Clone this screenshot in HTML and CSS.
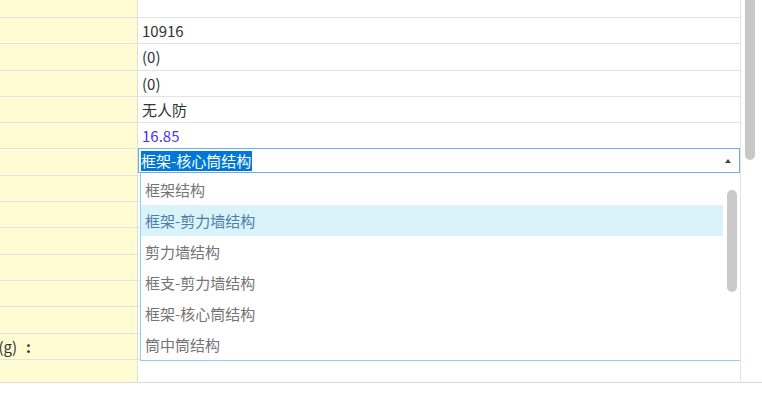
FILE: index.html
```html
<!DOCTYPE html>
<html lang="zh-CN">
<head>
    <meta charset="UTF-8">
    <meta name="viewport" content="width=device-width, initial-scale=1.0">
    <title>结构参数</title>
    <link rel="stylesheet" href="styles.css">
</head>
<body>
    <!-- property grid, scrolled a little -->
    <div class="grid-wrap">
        <div class="grid">
            <div class="rows">
                <div class="row"><div class="key"></div><div class="val"></div></div>
                <div class="row"><div class="key"></div><div class="val">10916</div></div>
                <div class="row"><div class="key"></div><div class="val">(0)</div></div>
                <div class="row"><div class="key"></div><div class="val">(0)</div></div>
                <div class="row"><div class="key"></div><div class="val">无人防</div></div>
                <div class="row"><div class="key"></div><div class="val calc">16.85</div></div>
                <div class="row">
                    <div class="key"></div>
                    <div class="val combo-cell">
                        <div class="combo">
                            <span class="combo-text">框架-核心筒结构</span>
                            <span class="combo-arrow"></span>
                        </div>
                        <!-- open dropdown list -->
                        <div class="combo-list">
                            <div class="combo-item">框架结构</div>
                            <div class="combo-item hover">框架-剪力墙结构</div>
                            <div class="combo-item">剪力墙结构</div>
                            <div class="combo-item">框支-剪力墙结构</div>
                            <div class="combo-item">框架-核心筒结构</div>
                            <div class="combo-item">筒中筒结构</div>
                            <div class="list-thumb"></div>
                        </div>
                    </div>
                </div>
                <div class="row"><div class="key"></div><div class="val"></div></div>
                <div class="row"><div class="key"></div><div class="val"></div></div>
                <div class="row"><div class="key"></div><div class="val"></div></div>
                <div class="row"><div class="key"></div><div class="val"></div></div>
                <div class="row"><div class="key"></div><div class="val"></div></div>
                <div class="row"><div class="key"></div><div class="val"></div></div>
                <div class="row">
                    <div class="key">
                        <div class="label-end"><span>设计基本地震加速度(g)</span><span class="colon">:</span></div>
                    </div>
                    <div class="val"></div>
                </div>
                <div class="row"><div class="key"></div><div class="val"></div></div>
            </div>
        </div>
        <div class="vscroll">
            <div class="vthumb"></div>
        </div>
    </div>
</body>
</html>
```

FILE: styles.css
```css
body {
    margin: 0;
    padding: 0;
    background: #ffffff;
    font-family: "Noto Sans CJK SC", "Noto Sans", sans-serif;
    font-size: 15px;
    color: #333333;
}

.grid-wrap {
    display: flex;
    height: 383px;
    border-bottom: 1px solid #dadada;
    box-sizing: border-box;
    overflow: hidden;
}

.grid {
    width: 741px;
    border-right: 1px solid #e2e2e2;
    box-sizing: border-box;
    overflow: hidden;
}

.rows {
    margin-top: -8.3px; /* list is scrolled a bit */
}

.row {
    display: flex;
    height: 26.3px;
    box-sizing: border-box;
    border-bottom: 1px solid #e3e3e3;
}

.key {
    width: 138px;
    flex-shrink: 0;
    background: #fffbd2;
    border-right: 1px solid #dedede;
    box-sizing: border-box;
    overflow: hidden;
    display: flex;
    align-items: center;
    white-space: nowrap;
}

/* label is longer than the column, only its end shows */
.label-end {
    width: 34px;
    flex-shrink: 0;
    display: flex;
    justify-content: flex-end;
    font-size: 15px;
    color: #333333;
}

.label-end span {
    flex-shrink: 0;
}

.label-end .colon {
    margin: 0 3px 0 9px;
    font-weight: bold;
}

.val {
    flex: 1;
    display: flex;
    align-items: center;
    padding-left: 4px;
    line-height: 1;
}

.val.calc {
    color: #4636f2;
}

/* combobox */
.combo-cell {
    position: relative;
    padding-left: 0;
    align-items: flex-start;
}

.combo {
    flex: 1;
    display: flex;
    align-items: center;
    justify-content: space-between;
    height: 25px;
    margin-top: -1px;
    border: 1px solid #72aae9;
    box-sizing: border-box;
    padding: 0 8px 0 2px;
    background: #ffffff;
}

.combo-text {
    background: #0078d7;
    color: #ffffff;
    line-height: 20px;
    padding-right: 1px;
}

.combo-arrow {
    width: 0;
    height: 0;
    border-left: 3px solid transparent;
    border-right: 3px solid transparent;
    border-bottom: 4px solid #444444;
}

.combo-list {
    position: absolute;
    top: 24px;
    left: 2px;
    right: -1px;
    height: 188px;
    background: #ffffff;
    border: 1px solid #94d0ea;
    border-top: none;
    box-sizing: border-box;
    padding-right: 17px;
    z-index: 2;
}

.combo-item {
    height: 31.17px;
    display: flex;
    align-items: center;
    padding-left: 4px;
    color: #747474;
}

.combo-item.hover {
    background: #daf2fa;
    color: #4b7fa6;
}

.list-thumb {
    position: absolute;
    right: 3px;
    top: 17px;
    width: 10px;
    height: 102px;
    border-radius: 5px;
    background: #c9c9c9;
}

/* outer scrollbar */
.vscroll {
    flex: 1;
    padding: 0 7px 0 4px;
}

.vthumb {
    height: 166px;
    margin-top: -6px;
    border-radius: 5px;
    background: #c8c8c8;
}
```
